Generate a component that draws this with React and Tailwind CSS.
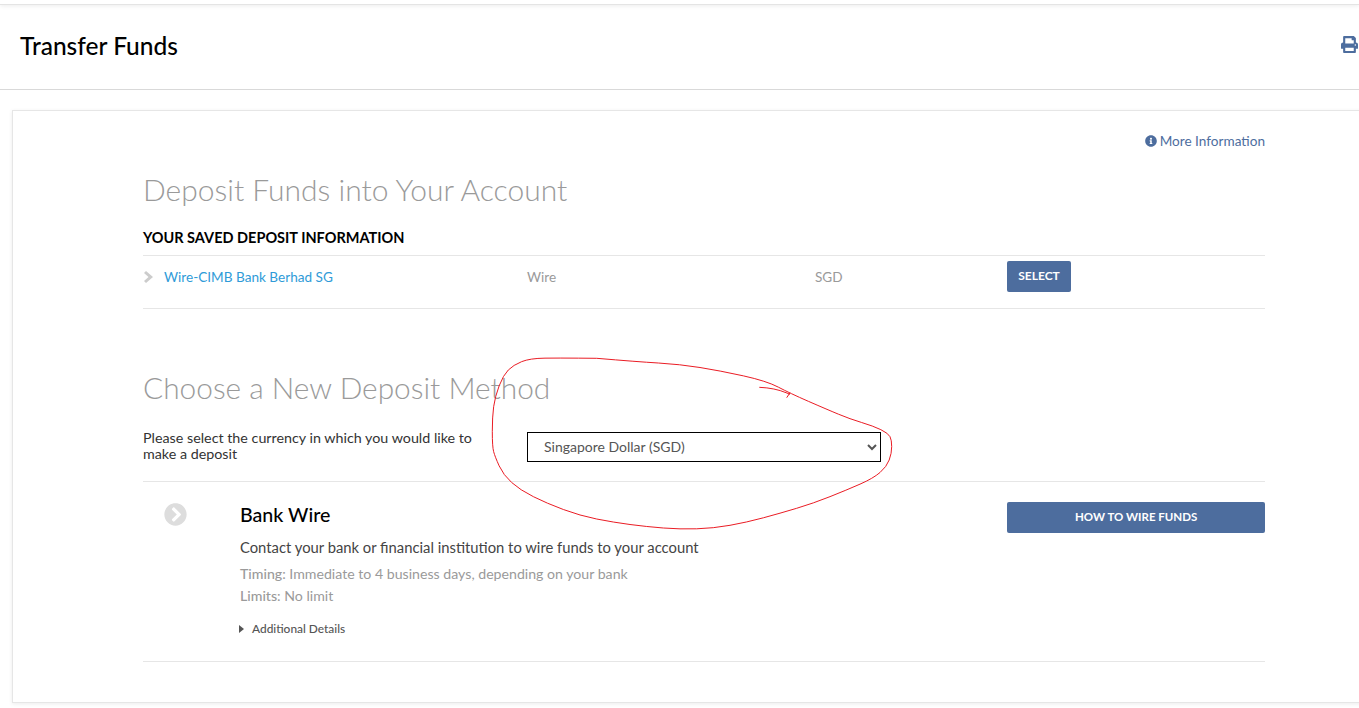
import React from "react";
import { FaPrint, FaInfoCircle, FaChevronCircleRight } from "react-icons/fa";

const pts = [[596.7,358.3],[636.7,361.7],[680,364.3],[720,370.7],[766.7,381],[790,393.3],[826.7,409.3],[850,419],[873.3,426],[888.3,433.3],[891.7,440],[891.7,453.3],[886.7,466.7],[873.3,478.3],[846.7,490],[813.3,503.3],[780,513.3],[746.7,522.3],[713.3,528.3],[680,529.3],[646.7,526.7],[613.3,522.3],[580,515.7],[546.7,503.3],[520,490],[503.3,475],[495,456.7],[492.3,446.7],[492.3,416.7],[495,396.7],[503.3,375],[513.3,365],[530,358.3],[560,358]];
const mid = (a, b) => [(a[0] + b[0]) / 2, (a[1] + b[1]) / 2];
const closed = [...pts, pts[0]];
let d = `M${closed[0][0]} ${closed[0][1]}`;
for (let i = 1; i < closed.length - 1; i++) {
  const m = mid(closed[i], closed[i + 1]);
  d += ` Q${closed[i][0]} ${closed[i][1]} ${m[0]} ${m[1]}`;
}
d += ` L${pts[0][0]} ${pts[0][1]}`;

export default function App() {
  return (
    <div className="relative h-[708px] w-full overflow-hidden bg-white font-['Lato','Liberation_Sans',sans-serif]">
      <div className="h-[5px] bg-white border-b border-[#e4e4e4] shadow-[0_1px_4px_rgba(0,0,0,0.08)]" />
      <header className="flex h-[85px] items-center justify-between border-b border-[#d9d9d9] pl-[20px] pr-[1px]">
        <h1 className="mb-[2px] text-[24.5px] font-medium leading-none text-black">Transfer Funds</h1>
        <FaPrint className="mb-[6px] text-[17px] text-[#4d6d9e]" />
      </header>
      <main className="pl-[12px] pt-[20px]">
        <div className="h-[593px] w-[1400px] border border-[#e6e6e6] pl-[130px] pt-[20px] shadow-[0_1px_4px_rgba(0,0,0,0.08)]">
          <div className="w-[1122px]">
            <div className="flex h-[20px] items-center justify-end gap-[3px] text-[13.6px] text-[#4d6d9e]">
              <FaInfoCircle className="text-[12px]" />
              <span>More Information</span>
            </div>
            <h2 className="mt-[18px] text-[30px] font-light leading-[40px] text-[#9a9a9a]">Deposit Funds into Your Account</h2>
            <h3 className="mt-[19px] text-[14.5px] font-bold leading-[20px] text-black">YOUR SAVED DEPOSIT INFORMATION</h3>
            <div className="mt-[7px] flex h-[54px] items-start border-y border-[#e6e6e6] text-[13.6px] text-[#9a9a9a]">
              <div className="flex h-[42px] w-[384px] items-center">
                <svg className="ml-[1px] shrink-0" width="9" height="12" viewBox="0 0 9 12" fill="#cccccc">
                  <path d="M0 2 L2 0 L9 6 L2 12 L0 10 L4.5 6 Z" />
                </svg>
                <span className="ml-[11px] text-[#2f9bd8]">Wire-CIMB Bank Berhad SG</span>
              </div>
              <div className="flex h-[42px] w-[288px] items-center">Wire</div>
              <div className="flex h-[42px] w-[192px] items-center">SGD</div>
              <button className="mt-[5px] h-[31px] w-[64px] rounded-[2px] bg-[#4d6d9e] pb-[2px] text-[12px] font-bold text-white">SELECT</button>
            </div>
            <h2 className="mt-[59px] text-[29.85px] font-light leading-[40px] text-[#9a9a9a]">Choose a New Deposit Method</h2>
            <div className="mt-[14px] flex h-[59px] items-start">
              <p className="mt-[8px] w-[384px] pr-[40px] text-[14.3px] leading-[16px] text-[#333333]">Please select the currency in which you would like to make a deposit</p>
              <select defaultValue="SGD" className="mt-[10px] h-[30px] w-[354px] border border-black bg-white pb-[2px] pl-[12px] text-[14px] text-[#555555]">
                <option value="SGD">Singapore Dollar (SGD)</option>
              </select>
            </div>
            <div className="flex h-[181px] border-y border-[#e6e6e6]">
              <FaChevronCircleRight className="ml-[21px] mt-[21px] text-[23px] text-[#dddddd]" />
              <div className="ml-[53px] w-[768px] pt-[20px]">
                <h4 className="text-[19.6px] font-medium leading-[26px] text-black">Bank Wire</h4>
                <p className="mt-[9px] text-[14.8px] leading-[20px] text-[#444444]">Contact your bank or financial institution to wire funds to your account</p>
                <p className="mt-[7px] text-[14.15px] leading-[20px] text-[#9a9a9a]"><span className="font-medium">Timing</span>: Immediate to 4 business days, depending on your bank</p>
                <p className="mt-[2px] text-[14.15px] leading-[20px] text-[#9a9a9a]"><span className="font-medium">Limits</span>: No limit</p>
                <div className="mt-[15px] flex h-[16px] items-center text-[11.9px] font-medium text-[#555555]">
                  <svg className="-ml-[1px] shrink-0" width="5" height="8" viewBox="0 0 5 8" fill="#555555">
                    <path d="M0 0 L5 4 L0 8 Z" />
                  </svg>
                  <span className="ml-[8px]">Additional Details</span>
                </div>
              </div>
              <button className="mt-[20px] h-[31px] w-[258px] rounded-[2px] bg-[#4d6d9e] pb-[2px] text-[11.5px] font-bold text-white">HOW TO WIRE FUNDS</button>
            </div>
          </div>
        </div>
      </main>
      <svg className="pointer-events-none absolute left-0 top-0" width="1359" height="708" fill="none" stroke="#ea1c24" strokeWidth="1">
        <path d={d} />
        <path d="M759.3 387.3 Q775 388 786 392.7 L790 394.3 M790 392.7 L786.7 397.7" />
      </svg>
    </div>
  );
}
